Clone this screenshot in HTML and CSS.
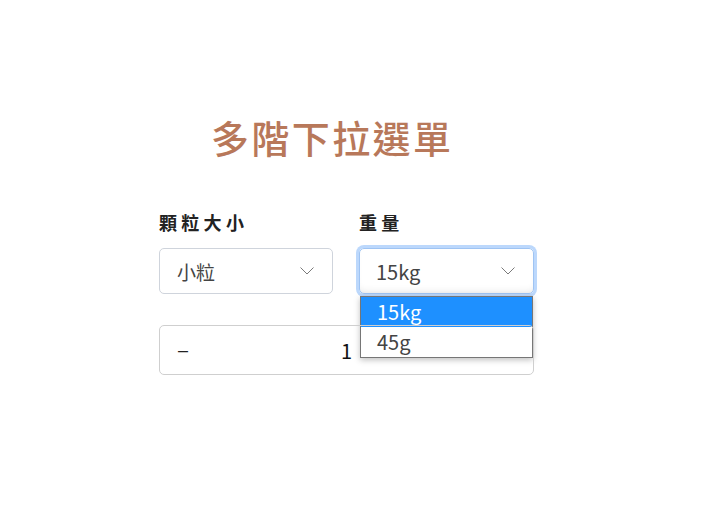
FILE: index.html
```html
<!DOCTYPE html>
<html lang="zh-Hant">
<head>
  <meta charset="UTF-8">
  <meta name="viewport" content="width=device-width, initial-scale=1.0">
  <link rel="stylesheet" href="styles.css">
  <title>多階下拉選單</title>
</head>
<body>
  <div class="panel">
    <h1 class="title">多階下拉選單</h1>

    <div class="fields">
      <div class="field">
        <label class="field-label">顆粒大小</label>
        <div class="select">
          <span>小粒</span>
          <svg class="chevron" width="14" height="8" viewBox="0 0 14 8"><polyline points="0.5,0.5 7,7 13.5,0.5" fill="none" stroke="#7a7a7a" stroke-width="1"/></svg>
        </div>
      </div>

      <div class="field">
        <label class="field-label">重量</label>
        <div class="select focused">
          <span>15kg</span>
          <svg class="chevron" width="14" height="8" viewBox="0 0 14 8"><polyline points="0.5,0.5 7,7 13.5,0.5" fill="none" stroke="#7a7a7a" stroke-width="1"/></svg>
        </div>
        <!-- open option list -->
        <ul class="options">
          <li class="option selected">15kg</li>
          <li class="option">45g</li>
        </ul>
      </div>
    </div>

    <div class="qty">
      <span class="minus">–</span>
      <span class="count">1</span>
    </div>
  </div>
</body>
</html>
```

FILE: styles.css
```css
body {
  margin: 0;
  padding: 0;
  background: #fff;
  font-family: "Noto Sans CJK TC", "Noto Sans", sans-serif;
}

.panel {
  width: 375px;
  margin: 112px 0 0 159px;
}

.title {
  margin: 0 0 48px 0;
  padding-left: 52px;
  font-size: 38px;
  line-height: 50px;
  font-weight: 500;
  letter-spacing: 2.4px;
  color: #b8785a;
}

.fields {
  display: grid;
  grid-template-columns: 174px 175px;
  column-gap: 26px;
}

.field {
  position: relative;
}

.field-label {
  display: block;
  margin-bottom: 14px;
  font-size: 18px;
  line-height: 24px;
  font-weight: 700;
  letter-spacing: 4.3px;
  color: #222;
}

.select {
  box-sizing: border-box;
  height: 46px;
  display: flex;
  align-items: center;
  justify-content: space-between;
  padding: 0 18px 0 17px;
  border: 1px solid #cfd4dc;
  border-radius: 5px;
  font-size: 19px;
  color: #444;
}

.select.focused {
  padding-left: 16px;
  border-color: #9fc4f3;
  font-size: 20px;
  box-shadow: 0 0 0 3px #bcd8fc, inset 0 -6px 8px -6px rgba(0, 0, 0, 0.12);
}

.chevron {
  display: block;
}

.options {
  position: absolute;
  left: 1px;
  right: 1px;
  top: 86px;
  margin: 0;
  padding: 0;
  list-style: none;
  background: #fff;
  border: 1px solid #767676;
  box-shadow: 0 2px 6px rgba(0, 0, 0, 0.25);
}

.option {
  height: 30px;
  line-height: 30px;
  padding-left: 16px;
  font-size: 20px;
  color: #444;
}

.option.selected {
  background: #1e90ff;
  color: #fff;
}

.qty {
  box-sizing: border-box;
  height: 50px;
  margin-top: 31px;
  position: relative;
  display: flex;
  align-items: center;
  justify-content: center;
  border: 1px solid #cfcfcf;
  border-radius: 5px;
}

.minus {
  position: absolute;
  left: 18px;
  font-family: "Liberation Sans", sans-serif;
  font-size: 18px;
  color: #222;
}

.count {
  font-size: 20px;
  color: #111;
}
```
